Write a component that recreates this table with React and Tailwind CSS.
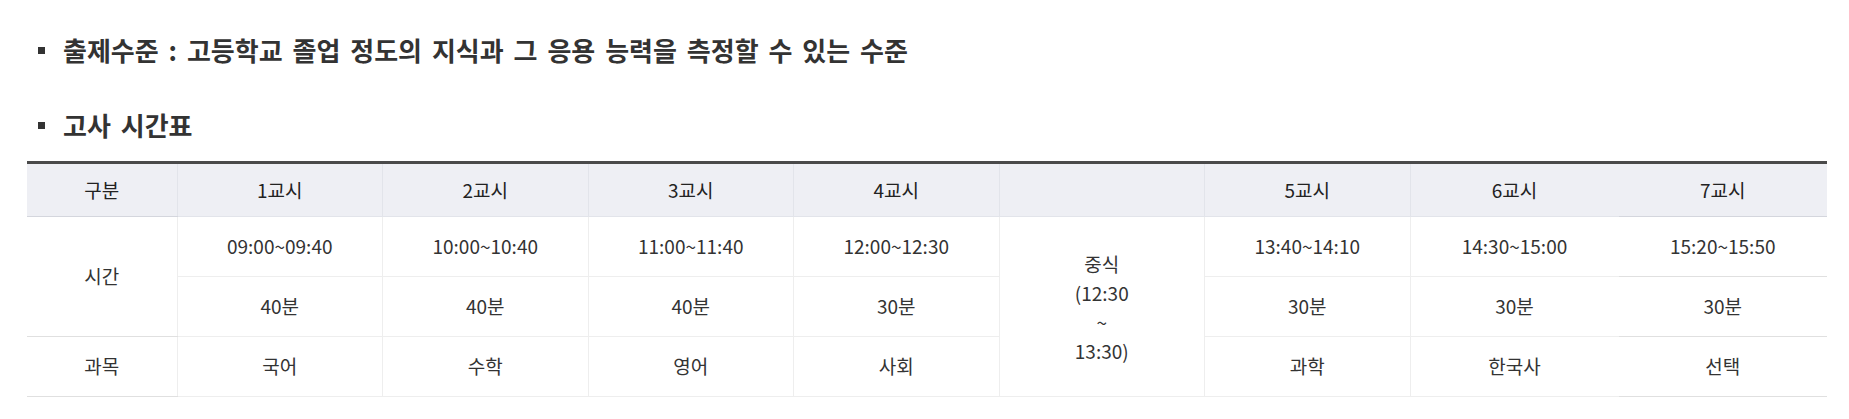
import React from "react";

const periods = [
  { name: "1교시", time: "09:00~09:40", mins: "40분", subject: "국어" },
  { name: "2교시", time: "10:00~10:40", mins: "40분", subject: "수학" },
  { name: "3교시", time: "11:00~11:40", mins: "40분", subject: "영어" },
  { name: "4교시", time: "12:00~12:30", mins: "30분", subject: "사회" },
  { name: "5교시", time: "13:40~14:10", mins: "30분", subject: "과학" },
  { name: "6교시", time: "14:30~15:00", mins: "30분", subject: "한국사" },
  { name: "7교시", time: "15:20~15:50", mins: "30분", subject: "선택" },
];

const font = { fontFamily: '"Noto Sans CJK KR", "Noto Sans", sans-serif' };

function Heading({ children }) {
  return (
    <div className="flex h-[40px] items-center pl-[11px]">
      <span className="mr-[18px] h-[7px] w-[7px] shrink-0 bg-[#333]" />
      <h3 className="text-[26px] font-bold leading-[40px] [word-spacing:4px] text-[#333]">{children}</h3>
    </div>
  );
}

export default function App() {
  const before = periods.slice(0, 4);
  const after = periods.slice(4);
  const th = "h-[54px] border-b border-[#d4d6dd] text-center font-normal text-[#222]";
  const td = "h-[60px] border-b border-[#e0e0e0] text-center";
  const divH = "border-l border-[#e2e4ea]";
  const divB = "border-l border-[#eeeeee]";

  const cells = (list, key) =>
    list.map((p) => (
      <td key={p.name + key} className={`${td} ${p.name === "7교시" ? "" : divB}`}>
        {p[key]}
      </td>
    ));

  return (
    <div className="min-h-[419px] bg-white pl-[27px] pr-[22px] pt-[30px]" style={font}>
      <Heading>출제수준 : 고등학교 졸업 정도의 지식과 그 응용 능력을 측정할 수 있는 수준</Heading>
      <div className="mt-[35px]">
        <Heading>고사 시간표</Heading>
      </div>
      <table className="mt-[16px] w-full table-fixed border-collapse border-t-[3px] border-[#4a4a4a] text-[19px] text-[#333]">
        <colgroup>
          <col className="w-[150px]" />
          <col className="w-[205.5px]" />
          <col className="w-[205.5px]" />
          <col className="w-[205.5px]" />
          <col className="w-[205.5px]" />
          <col className="w-[205.5px]" />
          <col className="w-[205.5px]" />
          <col />
          <col />
        </colgroup>
        <thead>
          <tr className="bg-[#eeeff4]">
            <th className={th}>구분</th>
            {before.map((p) => (
              <th key={p.name} className={`${th} ${divH}`}>{p.name}</th>
            ))}
            <th className={`${th} ${divH}`}></th>
            {after.map((p) => (
              <th key={p.name} className={`${th} ${p.name === "7교시" ? "" : divH}`}>{p.name}</th>
            ))}
          </tr>
        </thead>
        <tbody>
          <tr>
            <td rowSpan={2} className={td}>시간</td>
            {cells(before, "time")}
            <td rowSpan={3} className={`${td} ${divB} leading-[29px]`}>
              중식
              <br />
              (12:30
              <br />
              ~
              <br />
              13:30)
            </td>
            {cells(after, "time")}
          </tr>
          <tr>
            {cells(before, "mins")}
            {cells(after, "mins")}
          </tr>
          <tr>
            <td className={td}>과목</td>
            {cells(before, "subject")}
            {cells(after, "subject")}
          </tr>
        </tbody>
      </table>
    </div>
  );
}
